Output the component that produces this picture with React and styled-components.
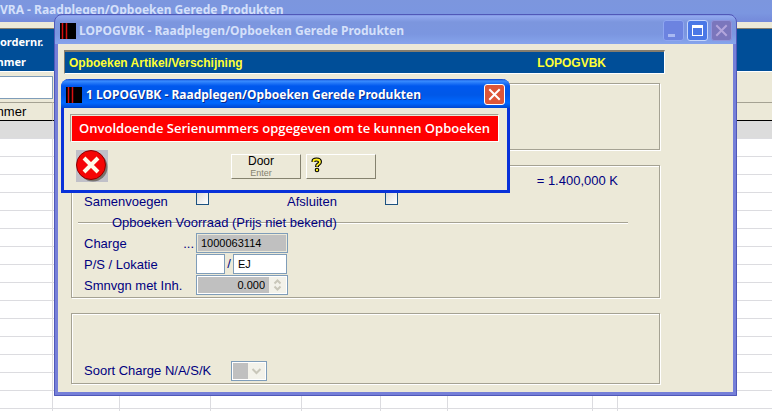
import React from 'react';
import styled, { createGlobalStyle } from 'styled-components';

const columns = [67, 91, 91, 79, 67, 145, 25];
const emptyRows = Array.from({ length: 18 }, (_, i) => i);

const MinimizeIcon = () => (
    <svg width="19" height="19" viewBox="0 0 19 19" aria-hidden="true">
        <rect x="4" y="13" width="7" height="3" fill="#a9b9f2" />
    </svg>
);

const MaximizeIcon = () => (
    <svg width="19" height="19" viewBox="0 0 19 19" aria-hidden="true">
        <path d="M4 4h11v11H4z M5 7v7h9V7z" fill="#fff" fillRule="evenodd" />
    </svg>
);

const CloseIcon = ({ color }) => (
    <svg width="19" height="19" viewBox="0 0 19 19" aria-hidden="true">
        <path d="M5 5l9 9M14 5l-9 9" stroke={color} strokeWidth="2" strokeLinecap="square" />
    </svg>
);

const AppIcon = () => (
    <svg width="16" height="16" viewBox="0 0 16 16" aria-hidden="true">
        <rect width="16" height="16" fill="#000" />
        <path d="M2.5 0v16M6.5 0v16" stroke="#d81010" strokeWidth="1.5" />
    </svg>
);

const ErrorIcon = () => (
    <svg width="32" height="32" viewBox="0 0 32 32" role="img" aria-label="Fout">
        <rect width="32" height="32" fill="#c0c0c8" />
        <circle cx="17" cy="17" r="14.5" fill="#77736e" />
        <circle cx="15" cy="15" r="14.5" fill="#f50505" stroke="#8a0000" />
        <path d="M8 8l14 14M22 8L8 22" stroke="#fffbe8" strokeWidth="4" />
    </svg>
);

const HelpIcon = () => (
    <svg width="12" height="16" viewBox="0 0 12 16" role="img" aria-label="Help">
        <path d="M2.5 5V4Q2.5 2.5 5.5 2.5Q9 2.5 9 5Q9 6.5 7 7.5Q6 8 6 10" fill="none" stroke="#000" strokeWidth="4" />
        <circle cx="6" cy="13" r="2.3" fill="#000" />
        <path d="M2.5 5V4Q2.5 2.5 5.5 2.5Q9 2.5 9 5Q9 6.5 7 7.5Q6 8 6 9.5" fill="none" stroke="#ffee20" strokeWidth="1.8" />
        <circle cx="6" cy="13" r="1.2" fill="#ffee20" />
    </svg>
);

const App = () => {
    return (
        <Desktop>
            <GlobalStyle />
            <OrderWindow>
                <OrderTitle>VRA - Raadplegen/Opboeken Gerede Produkten</OrderTitle>
                <OrderHeader>
                    <span>ordernr.</span>
                    <ClippedText>mmer</ClippedText>
                </OrderHeader>
                <FilterBar>
                    <FilterInput type="text" aria-label="Ordernummer" />
                </FilterBar>
                <OrderTable>
                    <colgroup>
                        <FirstCol />
                        {columns.map((width, i) => (
                            <col key={i} style={{ width }} />
                        ))}
                        <col />
                    </colgroup>
                    <thead>
                        <tr>
                            <th><ClippedText>mmer</ClippedText></th>
                            {columns.map((_, i) => (
                                <th key={i} />
                            ))}
                            <th />
                        </tr>
                    </thead>
                    <tbody>
                        {emptyRows.map((row) => (
                            <tr key={row}>
                                <td />
                                {columns.map((_, i) => (
                                    <td key={i} />
                                ))}
                                <td />
                            </tr>
                        ))}
                    </tbody>
                </OrderTable>
            </OrderWindow>

            <BookingWindow>
                <TitleBar>
                    <AppIcon />
                    <Title>LOPOGVBK - Raadplegen/Opboeken Gerede Produkten</Title>
                    <WindowButton type="button" aria-label="Minimaliseren"><MinimizeIcon /></WindowButton>
                    <WindowButton type="button" aria-label="Maximaliseren" $kind="bright"><MaximizeIcon /></WindowButton>
                    <WindowButton type="button" aria-label="Sluiten" $kind="muted"><CloseIcon color="#b3a5dc" /></WindowButton>
                </TitleBar>
                <BookingBody>
                    <Banner>
                        <span>Opboeken Artikel/Verschijning</span>
                        <BannerCode>LOPOGVBK</BannerCode>
                    </Banner>
                    <Panels>
                        <Panel $size="article" />
                        <Panel>
                            <Row>
                                <Amount>= 1.400,000 K</Amount>
                            </Row>
                            <Row>
                                <Label htmlFor="samenvoegen">Samenvoegen</Label>
                                <CheckBox type="checkbox" id="samenvoegen" />
                                <SecondLabel htmlFor="afsluiten">Afsluiten</SecondLabel>
                                <CheckBox type="checkbox" id="afsluiten" />
                            </Row>
                            <Divider>Opboeken Voorraad (Prijs niet bekend)</Divider>
                            <Row>
                                <Label htmlFor="charge">Charge<span>...</span></Label>
                                <Field type="text" id="charge" defaultValue="1000063114" readOnly $width={92} />
                            </Row>
                            <Row>
                                <Label htmlFor="ps">P/S / Lokatie</Label>
                                <Field type="text" id="ps" $width={29} />
                                <Slash>/</Slash>
                                <Field type="text" aria-label="Lokatie" defaultValue="EJ" $width={54} />
                            </Row>
                            <Row>
                                <Label htmlFor="inhoud">Smnvgn met Inh.</Label>
                                <SpinBox>
                                    <input type="text" id="inhoud" defaultValue="0.000" readOnly />
                                    <svg width="17" height="16" viewBox="0 0 17 16" aria-hidden="true">
                                        <rect width="17" height="16" fill="#f3f2ea" />
                                        <path d="M5.5 6.5l3-3 3 3M5.5 9.5l3 3 3-3" fill="none" stroke="#c9c7ba" strokeWidth="2" />
                                    </svg>
                                </SpinBox>
                            </Row>
                        </Panel>
                        <Panel $size="type">
                            <Row>
                                <WideLabel htmlFor="soort">Soort Charge N/A/S/K</WideLabel>
                                <SelectBox>
                                    <select id="soort" disabled>
                                        <option aria-label="Geen" />
                                    </select>
                                    <svg width="17" height="16" viewBox="0 0 17 16" aria-hidden="true">
                                        <rect width="17" height="16" fill="#f3f2ea" />
                                        <path d="M4.5 6l4 4 4-4" fill="none" stroke="#c9c7ba" strokeWidth="2" />
                                    </svg>
                                </SelectBox>
                            </Row>
                        </Panel>
                    </Panels>
                </BookingBody>
            </BookingWindow>

            <Dialog role="alertdialog" aria-labelledby="dialog-title" aria-describedby="dialog-message">
                <DialogTitleBar>
                    <AppIcon />
                    <DialogTitle id="dialog-title">1 LOPOGVBK - Raadplegen/Opboeken Gerede Produkten</DialogTitle>
                    <WindowButton type="button" aria-label="Sluiten" $kind="close"><CloseIcon color="#fff" /></WindowButton>
                </DialogTitleBar>
                <DialogBody>
                    <Message id="dialog-message">Onvoldoende Serienummers opgegeven om te kunnen Opboeken</Message>
                    <DialogFooter>
                        <ErrorIcon />
                        <Actions>
                            <ActionButton type="button">
                                Door
                                <KeyHint>Enter</KeyHint>
                            </ActionButton>
                            <HelpButton type="button" aria-label="Help"><HelpIcon /></HelpButton>
                        </Actions>
                    </DialogFooter>
                </DialogBody>
            </Dialog>
        </Desktop>
    );
};

const GlobalStyle = createGlobalStyle`
    * {
        box-sizing: border-box;
    }

    body {
        margin: 0;
        font-family: "Liberation Sans", Arial, sans-serif;
        font-size: 13px;
    }

    input, select, button {
        font-family: inherit;
        font-size: inherit;
    }
`;

const Desktop = styled.div`
    position: relative;
    height: 100vh;
    overflow: hidden;
    background: #fff;
`;

const OrderWindow = styled.section`
    background: #ece9d8;
`;

const OrderTitle = styled.div`
    height: 22px;
    margin-bottom: 6px;
    line-height: 19px;
    font-family: "Noto Sans", sans-serif;
    font-size: 12px;
    font-weight: bold;
    color: #d5e0fa;
    background: linear-gradient(#7c96de, #7b96e0 60%, #7489da);
`;

const OrderHeader = styled.div`
    display: flex;
    flex-direction: column;
    height: 44px;
    padding-top: 3px;
    border-top: 1px solid #857d6e;
    border-bottom: 1px solid #fff;
    line-height: 20px;
    font-family: "Noto Sans", sans-serif;
    font-size: 11px;
    font-weight: bold;
    color: #fff;
    background: #004e98;
`;

const ClippedText = styled.span`
    display: block;
    text-indent: -7px;
`;

const FilterBar = styled.div`
    height: 30px;
    padding-top: 4px;
`;

const FilterInput = styled.input`
    display: block;
    width: 53px;
    height: 23px;
    border: 1px solid #7f9db9;
    border-left: none;
    background: #fff;
`;

const OrderTable = styled.table`
    width: 100%;
    table-layout: fixed;
    border-collapse: separate;
    border-spacing: 0;
    background: #fff;

    th {
        height: 19px;
        padding: 0;
        border-top: 1px solid #a5a293;
        border-right: 1px solid #c8c5b4;
        border-bottom: 1px solid #000;
        font-weight: normal;
        text-align: left;
        line-height: 16px;
        background: #ece9d8;
    }

    td {
        height: 18px;
        padding: 0;
        border-right: 1px solid #dcdce0;
        border-bottom: 1px solid #dcdce0;
    }

    th:last-child, td:last-child {
        border-right: none;
    }

    tbody tr:first-child td {
        background: #dcdcdc;
    }
`;

const FirstCol = styled.col`
    width: 53px;
`;

const BookingWindow = styled.section`
    position: absolute;
    top: 14px;
    left: 54px;
    right: 35px;
    border: solid #757fd8;
    border-width: 0 4px 4px;
    border-radius: 8px 8px 0 0;
    background: #ece9d8;
    outline: 1px solid #5058b8;
    outline-offset: -1px;
`;

const TitleBar = styled.header`
    display: flex;
    align-items: center;
    gap: 3px;
    height: 30px;
    margin: 0 -4px;
    padding: 3px 5px 0 6px;
    border-radius: 8px 8px 0 0;
    background: linear-gradient(#6174cc, #93aaf0 2px, #7c96de 8px, #7b96e0 20px, #86a4ec);
`;

const Title = styled.h1`
    flex: 1;
    margin: 0;
    overflow: hidden;
    white-space: nowrap;
    font-family: "Noto Sans", sans-serif;
    font-size: 12px;
    font-weight: bold;
    color: #d5e0fa;
`;

const buttonColors = {
    dim: ['#8fa6f0', '#6c83e0'],
    bright: ['#c6d6fc', '#4a78e6'],
    muted: ['#8f93dc', '#7b76bc'],
    close: ['#fff', '#dd5638'],
};

const WindowButton = styled.button`
    display: flex;
    width: 21px;
    height: 21px;
    padding: 0;
    border: 1px solid ${({ $kind = 'dim' }) => buttonColors[$kind][0]};
    border-radius: 3px;
    background: ${({ $kind = 'dim' }) => buttonColors[$kind][1]};
`;

const BookingBody = styled.div`
    padding: 6px 0 8px 6px;
`;

const Banner = styled.div`
    display: flex;
    align-items: center;
    height: 24px;
    margin-right: 68px;
    padding: 0 4px;
    border-top: 2px solid #857d6e;
    border-left: 1px solid #857d6e;
    border-right: 1px solid #fff;
    border-bottom: 1px solid #fff;
    font-size: 12px;
    font-weight: bold;
    color: #ff3;
    background: #004e98;
`;

const BannerCode = styled.span`
    margin-left: auto;
    margin-right: 54px;
`;

const Panels = styled.div`
    display: grid;
    gap: 15px;
    margin: 9px 73px 0 7px;
    color: #000080;
`;

const panelSpace = {
    article: '62px 12px 3px',
    type: '46px 12px 2px',
    form: '3px 12px 2px',
};

const Panel = styled.div`
    padding: ${({ $size = 'form' }) => panelSpace[$size]};
    border: 1px solid #a5a293;
    box-shadow: 1px 1px #fff, inset 1px 1px #fff;
`;

const Row = styled.div`
    display: flex;
    align-items: center;
    height: 21px;
`;

const Amount = styled.span`
    margin-left: auto;
    margin-right: 29px;
    padding-top: 2px;
`;

const Label = styled.label`
    display: flex;
    justify-content: space-between;
    width: 112px;
    padding: 2px 2px 0 0;
`;

const SecondLabel = styled(Label)`
    width: 98px;
    margin-left: 78px;
`;

const WideLabel = styled(Label)`
    width: 147px;
    padding-top: 0;
`;

const CheckBox = styled.input`
    appearance: none;
    align-self: flex-start;
    width: 13px;
    height: 13px;
    margin: 2px 0 0;
    border: 1px solid #1c5180;
    background: linear-gradient(135deg, #dcdcd7, #fff);
`;

const Divider = styled.div`
    height: 21px;
    margin: 0 19px 0 -6px;
    padding-left: 34px;
    line-height: 23px;
    background: linear-gradient(#a5a293 50%, #fff 50%) 0 11px / 100% 2px no-repeat;
`;

const Field = styled.input`
    width: ${({ $width }) => $width}px;
    height: 20px;
    padding: 0 4px;
    border: 1px solid #7f9db9;
    font-size: 11px;
    color: #000;
    background: #fff;

    &:read-only {
        background: #c0c0c0;
        box-shadow: inset 0 0 0 1px #ece9d8;
    }
`;

const Slash = styled.span`
    width: 8px;
    text-align: center;
`;

const SpinBox = styled.div`
    display: flex;
    align-items: center;
    width: 92px;
    height: 20px;
    padding: 1px;
    border: 1px solid #7f9db9;
    background: #fff;

    input {
        flex: 1;
        min-width: 0;
        height: 16px;
        padding: 0 4px;
        border: none;
        font-size: 11px;
        text-align: right;
        background: #c0c0c0;
    }
`;

const SelectBox = styled.div`
    display: flex;
    align-items: center;
    width: 36px;
    height: 20px;
    padding: 1px;
    border: 1px solid #7f9db9;
    background: #fff;

    select {
        appearance: none;
        flex: 1;
        min-width: 0;
        height: 16px;
        padding: 0;
        border: none;
        border-radius: 0;
        background: #c0c0c0;
        opacity: 1;
    }
`;

const Dialog = styled.section`
    position: absolute;
    top: 79px;
    left: 61px;
    width: 449px;
    border: solid #0831d9;
    border-width: 0 3px 3px;
    border-radius: 8px 8px 0 0;
    background: #ece9d8;
`;

const DialogTitleBar = styled(TitleBar)`
    height: 29px;
    margin: 0 -3px;
    padding: 2px 5px 0;
    background: linear-gradient(#0a3fc8, #3a8cff 2px, #0058ee 7px, #0058e8 16px, #0068ff 24px, #0046d0);
`;

const DialogTitle = styled(Title)`
    margin-left: 1px;
    color: #fff;
    text-shadow: 1px 1px #0a2a8a;
`;

const DialogBody = styled.div`
    padding: 6px 8px 8px 6px;
`;

const Message = styled.p`
    height: 28px;
    margin: 0;
    border: 1px solid;
    border-color: #a5a293 #fff #fff #a5a293;
    box-shadow: inset 1px 1px #ece9d8;
    line-height: 26px;
    font-family: "Open Sans", sans-serif;
    font-size: 13px;
    font-weight: 600;
    text-align: center;
    white-space: nowrap;
    color: #fff;
    background: #f00;
`;

const DialogFooter = styled.div`
    display: flex;
    align-items: center;
    padding: 8px 6px 0;
`;

const Actions = styled.div`
    display: flex;
    gap: 5px;
    margin-left: 123px;
`;

const ActionButton = styled.button`
    display: flex;
    flex-direction: column;
    align-items: center;
    justify-content: center;
    width: 70px;
    height: 25px;
    padding: 0 10px 0 0;
    border: 1px solid;
    border-color: #fff #85826f #85826f #fff;
    font-size: 12px;
    line-height: 13px;
    color: #000;
    background: #ece9d8;
`;

const HelpButton = styled(ActionButton)`
    align-items: flex-start;
    padding: 0 0 2px 4px;
`;

const KeyHint = styled.span`
    line-height: 10px;
    font-size: 9px;
    color: #85826f;
`;

export default App;
